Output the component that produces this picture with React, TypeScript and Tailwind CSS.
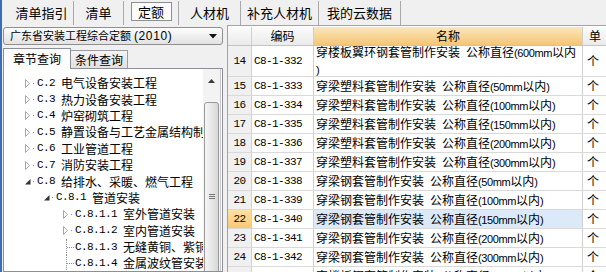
import React from "react";

const cjk = "font-['Noto_Sans_CJK_SC','Liberation_Sans',sans-serif]";

function Mono({ children }: { children: React.ReactNode }) {
  return (
    <span className="font-['Liberation_Mono',monospace] text-[11px] tracking-[-0.6px] leading-none">
      {children}
    </span>
  );
}

function Lat({ children }: { children: React.ReactNode }) {
  return (
    <span className="font-['Liberation_Sans',sans-serif] text-[11px] tracking-[-0.4px]">
      {children}
    </span>
  );
}

function Sep() {
  return <div className="w-px bg-[#a9a9a9] mt-[1px]" />;
}

function TabBar() {
  return (
    <div className="flex h-[25px] shrink-0 text-[13px] leading-none">
      <div className="w-[71px] flex items-center justify-center pl-[8px]">清单指引</div>
      <Sep />
      <div className="w-[49px] flex items-center justify-center">清单</div>
      <Sep />
      <div className="w-[54px] flex items-center justify-center">
        <div className="w-[41px] h-[19px] mb-[2px] border border-[#8e8e8e] bg-[#fbfbfb] flex items-center justify-center">
          定额
        </div>
      </div>
      <Sep />
      <div className="w-[61px] flex items-center justify-center">人材机</div>
      <Sep />
      <div className="w-[77px] flex items-center justify-center">补充人材机</div>
      <Sep />
      <div className="w-[81px] flex items-center justify-center">我的云数据</div>
      <Sep />
    </div>
  );
}

type Node = { lvl: number; st: "c" | "e" | "l"; code: string; name: string };

const tree: Node[] = [
  { lvl: 0, st: "c", code: "C.2", name: "电气设备安装工程" },
  { lvl: 0, st: "c", code: "C.3", name: "热力设备安装工程" },
  { lvl: 0, st: "c", code: "C.4", name: "炉窑砌筑工程" },
  { lvl: 0, st: "c", code: "C.5", name: "静置设备与工艺金属结构制作安装工程" },
  { lvl: 0, st: "c", code: "C.6", name: "工业管道工程" },
  { lvl: 0, st: "c", code: "C.7", name: "消防安装工程" },
  { lvl: 0, st: "e", code: "C.8", name: "给排水、采暖、燃气工程" },
  { lvl: 1, st: "e", code: "C.8.1", name: "管道安装" },
  { lvl: 2, st: "c", code: "C.8.1.1", name: "室外管道安装" },
  { lvl: 2, st: "c", code: "C.8.1.2", name: "室内管道安装" },
  { lvl: 2, st: "l", code: "C.8.1.3", name: "无缝黄铜、紫铜管安装" },
  { lvl: 2, st: "l", code: "C.8.1.4", name: "金属波纹管安装" },
  { lvl: 2, st: "c", code: "C.8.1.5", name: "铝管安装（法兰连接）" },
];

const indent = ["pl-[21px]", "pl-[40px]", "pl-[59px]"];

function Expander({ open }: { open: boolean }) {
  return open ? (
    <svg width="6" height="9" viewBox="0 0 6 9" className="block">
      <path d="M5.5 2 L5.5 7.5 L0 7.5 Z" fill="#333" />
    </svg>
  ) : (
    <svg width="6" height="9" viewBox="0 0 6 9" className="block">
      <path d="M0.5 0.5 L4.5 4.5 L0.5 8.5 Z" fill="#fff" stroke="#a8a8a8" />
    </svg>
  );
}

function TreeRow({ n }: { n: Node }) {
  return (
    <div className={`flex items-center h-[16.4px] whitespace-nowrap text-[12px] leading-none ${indent[n.lvl]}`}>
      {n.st === "l" ? (
        <span className="relative w-[12px] self-stretch shrink-0">
          <span className="absolute left-[3px] top-0 bottom-0 border-l border-dotted border-[#8f8f8f]" />
          <span className="absolute left-[4px] top-[8px] w-[7px] border-t border-dotted border-[#8f8f8f]" />
        </span>
      ) : (
        <>
          <span className="w-[6px] shrink-0 flex items-center">
            <Expander open={n.st === "e"} />
          </span>
          <span className="w-[6px] shrink-0 flex items-center">
            <span className="ml-[2px] w-px h-px bg-[#8a8a8a]" />
          </span>
        </>
      )}
      <Mono>{n.code}{"\u00a0"}</Mono>
      <span>{n.name}</span>
    </div>
  );
}

function LeftPanel() {
  return (
    <div className="w-[221px] shrink-0 pl-[1px] pt-[2px] flex flex-col">
      <div className="h-[18px] w-[220px] rounded-[3px] border border-[#8f8f8f] bg-gradient-to-b from-[#fdfdfd] to-[#e2e2e2] flex items-center pl-[6px] pr-[5px]">
        <span className="text-[11px] leading-none whitespace-nowrap flex-1">
          广东省安装工程综合定额
          <span className="font-['Liberation_Sans',sans-serif] text-[12px] ml-[3px] tracking-[0.6px]">(2010)</span>
        </span>
        <svg width="8" height="5" viewBox="0 0 8 5" className="block">
          <path d="M0 0 L8 0 L4 4.5 Z" fill="#111" />
        </svg>
      </div>
      <div className="flex h-[21px] mt-[2px] items-end text-[12px] leading-none">
        <div className="w-[68px] h-[21px] border border-b-0 border-[#8c8f96] bg-[#fcfcfc] flex items-center justify-center relative top-px">
          章节查询
        </div>
        <div className="w-[57px] h-[18px] border border-l-0 border-b-0 border-[#9a9da4] bg-gradient-to-b from-[#f4f4f4] to-[#e1e1e1] flex items-center justify-center">
          条件查询
        </div>
      </div>
      <div className="flex-1 min-h-0 w-[220px] border border-[#8c8f96] bg-white flex overflow-hidden">
        <div className="flex-1 min-w-0 overflow-hidden pt-[6px]">
          {tree.map((n) => (
            <TreeRow key={n.code} n={n} />
          ))}
        </div>
        <div className="w-[17px] shrink-0 bg-[#f3f3f3] flex flex-col">
          <div className="h-[17px] shrink-0 flex items-end justify-center pb-[3px]">
            <svg width="7" height="4" viewBox="0 0 7 4" className="block">
              <path d="M3.5 0 L7 4 L0 4 Z" fill="#3a3a3a" />
            </svg>
          </div>
          <div className="h-[16px] shrink-0" />
          <div className="h-[188px] shrink-0 mx-[1px] rounded-[3px] border border-[#9a9a9a] bg-gradient-to-r from-[#f6f6f6] to-[#d8d8d8] flex flex-col items-center justify-center gap-[1px]">
            <div className="w-[6px] h-px bg-[#777]" />
            <div className="w-[6px] h-px bg-[#777]" />
            <div className="w-[6px] h-px bg-[#777]" />
          </div>
        </div>
        <div className="w-[2px] shrink-0 border-l border-[#c9c9c9]" />
      </div>
    </div>
  );
}

type Row = { n: number; c: string; a: string; d: string; two?: boolean; sel?: boolean };

const rows: Row[] = [
  { n: 14, c: "C8-1-332", a: "穿楼板翼环钢套管制作安装", d: "600", two: true },
  { n: 15, c: "C8-1-333", a: "穿梁塑料套管制作安装", d: "50" },
  { n: 16, c: "C8-1-334", a: "穿梁塑料套管制作安装", d: "100" },
  { n: 17, c: "C8-1-335", a: "穿梁塑料套管制作安装", d: "150" },
  { n: 18, c: "C8-1-336", a: "穿梁塑料套管制作安装", d: "200" },
  { n: 19, c: "C8-1-337", a: "穿梁塑料套管制作安装", d: "300" },
  { n: 20, c: "C8-1-338", a: "穿梁钢套管制作安装", d: "50" },
  { n: 21, c: "C8-1-339", a: "穿梁钢套管制作安装", d: "100" },
  { n: 22, c: "C8-1-340", a: "穿梁钢套管制作安装", d: "150", sel: true },
  { n: 23, c: "C8-1-341", a: "穿梁钢套管制作安装", d: "200" },
  { n: 24, c: "C8-1-342", a: "穿梁钢套管制作安装", d: "300" },
  { n: 25, c: "C8-1-343", a: "穿楼板钢套管制作安装", d: "50" },
];

function Gap() {
  return <span className="inline-block w-[6px]" />;
}

function GridRow({ r }: { r: Row }) {
  return (
    <div className={`flex shrink-0 border-b border-[#d9d9d9] ${r.two ? "h-[31px]" : "h-[19px]"} text-[12px] leading-none`}>
      <div
        className={`w-[24px] shrink-0 border-r border-[#d0d0d0] flex items-center justify-center ${
          r.sel ? "bg-gradient-to-b from-[#fde0a6] to-[#f9c872]" : "bg-[#f0f0f0]"
        }`}
      >
        <Mono>{r.n}</Mono>
      </div>
      <div className="w-[62px] shrink-0 border-r border-[#d0d0d0] bg-white flex items-center pl-[2px]">
        <Mono>{r.c}</Mono>
      </div>
      <div
        className={`w-[269px] shrink-0 border-r border-[#d0d0d0] flex items-center pl-[2px] whitespace-nowrap overflow-hidden ${
          r.sel ? "bg-[#dbe9f9]" : "bg-white"
        }`}
      >
        {r.two ? (
          <div className="leading-[15px]">
            <div>
              {r.a}
              <Gap />
              公称直径<Lat>({r.d}mm</Lat>以内
            </div>
            <div>
              <Lat>)</Lat>
            </div>
          </div>
        ) : (
          <span className="leading-none">
            {r.a}
            <Gap />
            公称直径<Lat>({r.d}mm</Lat>以内<Lat>)</Lat>
          </span>
        )}
      </div>
      <div className="flex-1 bg-white flex items-center pl-[4px]">个</div>
    </div>
  );
}

function Grid() {
  return (
    <div className="flex-1 min-w-0 flex flex-col border-t border-l border-[#a3a3a3] bg-white overflow-hidden">
      <div className="flex h-[20px] shrink-0 border-b border-[#c4c4c4] border-t border-t-white text-[12px] leading-none">
        <div className="w-[24px] shrink-0 border-r border-[#cfcfcf] bg-gradient-to-b from-[#fbfbfb] to-[#ebebeb]" />
        <div className="w-[62px] shrink-0 border-r border-[#cfcfcf] bg-gradient-to-b from-[#fbfbfb] to-[#ebebeb] flex items-center justify-center">
          编码
        </div>
        <div className="w-[269px] shrink-0 border-r border-[#cfcfcf] bg-gradient-to-b from-[#fce6bc] to-[#f4c574] flex items-center justify-center">
          名称
        </div>
        <div className="flex-1 bg-gradient-to-b from-[#fbfbfb] to-[#ebebeb] flex items-center pl-[6px]">
          单
        </div>
      </div>
      {rows.map((r) => (
        <GridRow key={r.n} r={r} />
      ))}
    </div>
  );
}

export default function App() {
  return (
    <div className={`w-[606px] h-[272px] overflow-hidden bg-[#f0f0f0] flex text-black ${cjk}`}>
      <div className="w-[2px] shrink-0 bg-[#3f6cb4]" />
      <div className="flex-1 min-w-0 flex flex-col">
        <TabBar />
        <div className="flex flex-1 min-h-0">
          <LeftPanel />
          <div className="w-[4px] shrink-0" />
          <Grid />
        </div>
      </div>
    </div>
  );
}
